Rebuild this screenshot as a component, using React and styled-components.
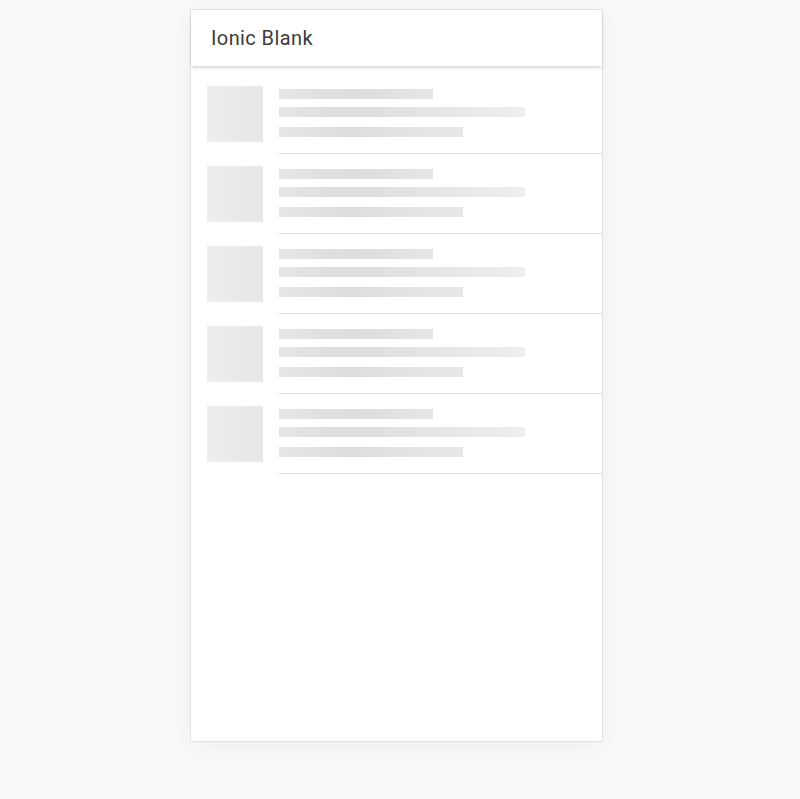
import React from "react";
import styled, { createGlobalStyle } from "styled-components";

const GlobalStyle = createGlobalStyle`
  html, body {
    margin: 0;
    padding: 0;
    background: #fafafa;
    font-family: Roboto, "Noto Sans", sans-serif;
  }
`;

const ITEMS = [1, 2, 3, 4, 5];

const App = () => {
  return (
    <Page>
      <GlobalStyle />
      <Device>
        <Toolbar>
          <Title>Ionic Blank</Title>
        </Toolbar>
        <List>
          {ITEMS.map(id => (
            <Item key={id}>
              <Thumb />
              <Label>
                <Bar width={50} />
                <Bar width={80} gap={8} />
                <Bar width={60} gap={10} />
              </Label>
            </Item>
          ))}
        </List>
      </Device>
    </Page>
  );
};

const Page = styled.div`
  padding: 9px 0 57px 190px;
`;

const Device = styled.div`
  width: 411px;
  height: 731px;
  background: #fff;
  border: 1px solid #e2e2e2;
  box-shadow: 0 4px 24px rgba(0, 0, 0, 0.06);
  display: flex;
  flex-direction: column;
`;

const Toolbar = styled.header`
  height: 56px;
  display: flex;
  align-items: center;
  padding: 0 20px;
  position: relative;
  z-index: 1;
  box-shadow: 0 2px 3px -1px rgba(0, 0, 0, 0.16), 0 3px 4px 0 rgba(0, 0, 0, 0.05);
`;

const Title = styled.h1`
  margin: 0;
  font-size: 20px;
  font-weight: 400;
  letter-spacing: 0.02em;
  color: #3c3c3c;
`;

const List = styled.div`
  padding-top: 8px;
`;

const shimmer = `
  background-color: #fff;
  background-image: linear-gradient(
    to right,
    rgba(0, 0, 0, 0.065) 25%,
    rgba(0, 0, 0, 0.135) 44%,
    rgba(0, 0, 0, 0.065) 65%
  );
  background-size: 800px 100%;
  background-attachment: fixed;
`;

const Item = styled.div`
  display: flex;
  align-items: flex-start;
  padding-left: 16px;
  height: 80px;
`;

const Thumb = styled.div`
  width: 56px;
  height: 56px;
  margin: 12px 16px 0 0;
  flex-shrink: 0;
  ${shimmer}
`;

const Label = styled.div`
  flex: 1;
  height: 80px;
  box-sizing: border-box;
  padding: 15px 16px 0 0;
  border-bottom: 1px solid #dedede;
  display: flex;
  flex-direction: column;
`;

const Bar = styled.div`
  width: ${p => p.width}%;
  height: 10px;
  margin-top: ${p => p.gap || 0}px;
  ${shimmer}
`;

export default App;
